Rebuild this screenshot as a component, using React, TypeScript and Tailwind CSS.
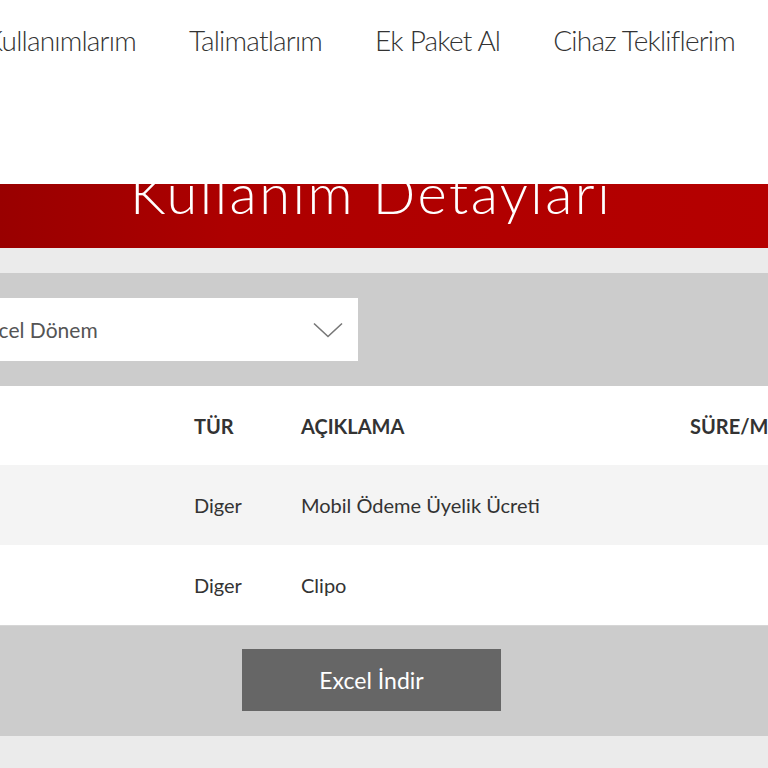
import React from "react";

const navItems = ["Kullanımlarım", "Talimatlarım", "Ek Paket Al", "Cihaz Tekliflerim"];

const rows = [
  { tur: "Diger", aciklama: "Mobil Ödeme Üyelik Ücreti", bg: "bg-[#f4f4f4]" },
  { tur: "Diger", aciklama: "Clipo", bg: "bg-white" },
];

export default function App() {
  return (
    <div
      className="w-[768px] h-[768px] overflow-hidden bg-white"
      style={{ fontFamily: "Lato, 'Open Sans', 'Liberation Sans', sans-serif" }}
    >
      {/* Top navigation */}
      <header className="h-[184px] bg-white">
        <nav className="flex justify-end gap-[53px] pr-[33px] pt-[26px]">
          {navItems.map((item) => (
            <span
              key={item}
              className="shrink-0 whitespace-nowrap text-[28px] leading-none font-light tracking-[-0.8px] text-[#333333]"
            >
              {item}
            </span>
          ))}
        </nav>
      </header>

      {/* Red title band */}
      <div className="h-[64px] overflow-hidden bg-gradient-to-r from-[#990000] via-[#ad0000] via-30% to-[#b50000] flex justify-center pr-[26px]">
        <h1 className="-mt-[19px] shrink-0 whitespace-nowrap text-[56px] leading-none font-light tracking-[2.5px] text-white">
          Kullanım Detayları
        </h1>
      </div>

      <div className="h-[25px] bg-[#ebebeb]" />

      {/* Filter area */}
      <div className="h-[113px] bg-[#cccccc] pt-[25px]">
        <div className="w-[358px] h-[63px] bg-white flex items-center overflow-hidden pr-[15px]">
          <span className="-ml-[40px] shrink-0 whitespace-nowrap text-[21px] text-[#555555]">
            Güncel Dönem
          </span>
          <svg className="ml-auto" width="30" height="16" viewBox="0 0 30 16" fill="none">
            <path d="M1 1.5 L15 14.5 L29 1.5" stroke="#777777" strokeWidth="1.6" />
          </svg>
        </div>
      </div>

      {/* Table */}
      <div className="grid grid-cols-[194px_107px_389px_1fr] h-[79px] items-center bg-white text-[20px] font-bold text-[#333333]">
        <span />
        <span className="whitespace-nowrap">TÜR</span>
        <span className="whitespace-nowrap">AÇIKLAMA</span>
        <span className="whitespace-nowrap">SÜRE/MİKTAR</span>
      </div>
      {rows.map((r, i) => (
        <div
          key={i}
          className={`grid grid-cols-[194px_107px_389px_1fr] h-[80px] items-center text-[20px] text-[#333333] ${r.bg}`}
        >
          <span />
          <span className="whitespace-nowrap">{r.tur}</span>
          <span className="whitespace-nowrap">{r.aciklama}</span>
          <span />
        </div>
      ))}

      {/* Excel button area */}
      <div className="h-[111px] bg-[#cccccc] border-t border-[#d6d6d6] flex justify-center items-start pt-[23px] pr-[25px]">
        <button className="w-[259px] h-[62px] bg-[#666666] text-white text-[23px] flex items-center justify-center">
          Excel İndir
        </button>
      </div>

      <div className="h-[40px] bg-[#ebebeb]" />
    </div>
  );
}
